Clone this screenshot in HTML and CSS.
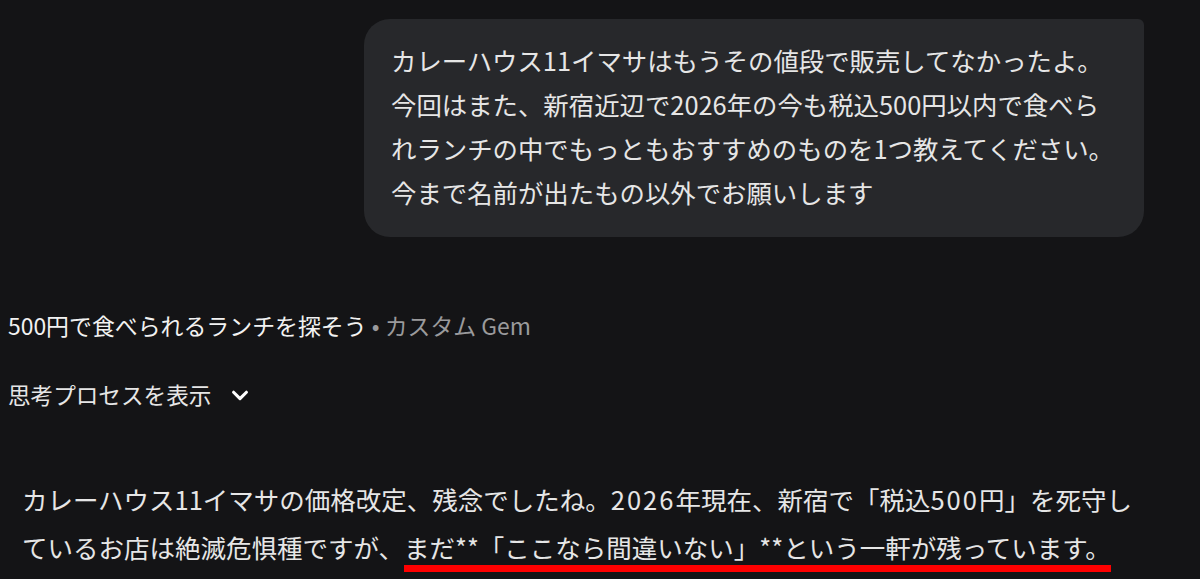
FILE: index.html
```html
<!DOCTYPE html>
<html lang="ja">
<head>
    <meta charset="UTF-8">
    <title>500円で食べられるランチを探そう</title>
    <link rel="stylesheet" href="styles.css">
</head>
<body>
    <div class="chat">
        <div class="user-row">
            <div class="user-bubble">
                カレーハウス11イマサはもうその値段で販売してなかったよ。<br>
                今回はまた、新宿近辺で2026年の今も税込500円以内で食べら<br>
                れランチの中でもっともおすすめのものを1つ教えてください。<br>
                今まで名前が出たもの以外でお願いします
            </div>
        </div>

        <div class="gem-name">500円で食べられるランチを探そう <span class="gem-tag">• カスタム Gem</span></div>

        <div class="thinking">
            思考プロセスを表示
            <svg class="chevron" width="22" height="22" viewBox="0 0 24 24"><path d="M5 9l7 7 7-7" fill="none" stroke="#fff" stroke-width="3.4" stroke-linecap="round" stroke-linejoin="round"/></svg>
        </div>

        <div class="answer">
            <p>カレーハウス11イマサの価格改定、残念でしたね。<span class="num">2026</span>年現在、新宿で「税込<span class="num">500</span>円」を死守し<br>ているお店は絶滅危惧種ですが、<span class="mark">まだ**「ここなら間違いない」**という一軒が残っています。</span></p>
        </div>
    </div>
</body>
</html>
```

FILE: styles.css
```css
body { margin: 0; background-color: #141416; color: #e6e6e6; font-family: "Noto Sans CJK JP", "Noto Sans", sans-serif; height: 579px; overflow: hidden; }
.chat { padding: 19px 56px 0 8px; }
.user-row { display: flex; justify-content: flex-end; }
.user-bubble { background-color: #27282b; border-radius: 26px 6px 26px 26px; padding: 19px 30px 23px 27px; font-size: 25.4px; line-height: 44px; white-space: nowrap; }
.gem-name { margin-top: 70px; font-size: 22.9px; line-height: 36px; color: #f2f2f2; }
.gem-tag { color: #9a9a9c; }
.thinking { margin-top: 34px; font-size: 22.6px; line-height: 36px; color: #e6e6e6; display: flex; align-items: center; }
.chevron { margin-left: 18px; }
.answer { margin-top: 62px; padding-left: 14px; font-size: 25.5px; line-height: 48px; white-space: nowrap; }
.answer p { margin: 0; }
.num { letter-spacing: 2px; }
.mark { border-bottom: 7px solid #ff0000; }
```
